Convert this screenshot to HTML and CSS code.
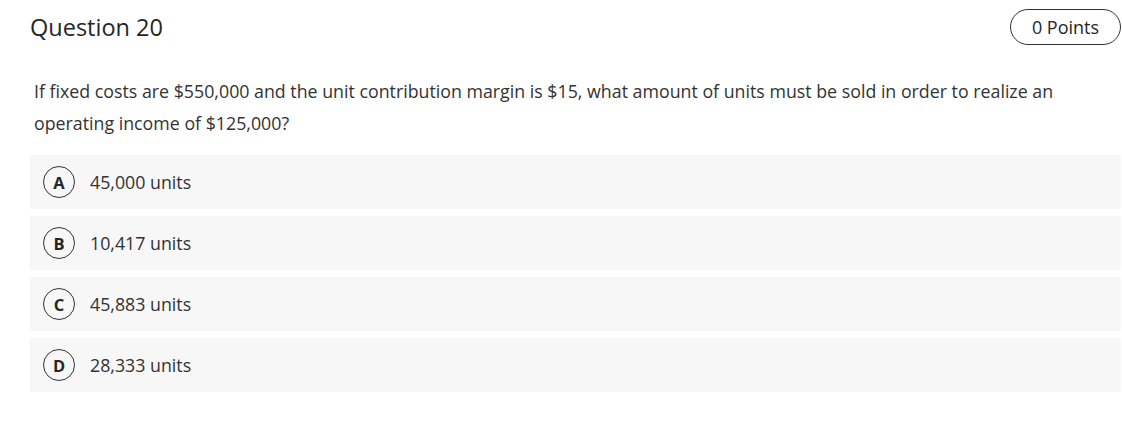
FILE: index.html
```html
<!DOCTYPE html>
<html>
<head>
<meta charset="utf-8">
<link rel="stylesheet" href="styles.css">
</head>
<body>
<div class="page">
  <div class="header">
    <h2 class="title">Question 20</h2>
    <span class="points">0 Points</span>
  </div>
  <p class="question">If fixed costs are $550,000 and the unit contribution margin is $15, what amount of units must be sold in order to realize an operating income of $125,000?</p>
  <div class="options">
    <div class="option"><span class="letter">A</span><span class="label">45,000 units</span></div>
    <div class="option"><span class="letter">B</span><span class="label">10,417 units</span></div>
    <div class="option"><span class="letter">C</span><span class="label">45,883 units</span></div>
    <div class="option"><span class="letter">D</span><span class="label">28,333 units</span></div>
  </div>
</div>
</body>
</html>
```

FILE: styles.css
```css
html, body {
  margin: 0;
  padding: 0;
  background: #ffffff;
}
body {
  font-family: "Open Sans", "Noto Sans", sans-serif;
  color: #262626;
}
.page {
  padding: 9px 1px 0 30px;
}
.header {
  display: flex;
  justify-content: space-between;
  align-items: center;
  height: 36px;
}
.title {
  margin: 0;
  font-size: 23.5px;
  font-weight: 400;
  color: #262626;
  line-height: 32px;
}
.points {
  box-sizing: border-box;
  height: 36px;
  width: 111px;
  border: 1.5px solid #333;
  border-radius: 18px;
  display: flex;
  align-items: center;
  justify-content: center;
  font-size: 18px;
  color: #262626;
}
.question {
  margin: 30px 0 0 4px;
  font-size: 17.8px;
  line-height: 32px;
  color: #333;
  padding-right: 40px;
}
.options {
  margin-top: 16px;
  display: flex;
  flex-direction: column;
  gap: 7px;
}
.option {
  display: flex;
  align-items: center;
  height: 54px;
  background: #f7f7f7;
  border-radius: 2px;
  padding-left: 13px;
}
.letter {
  box-sizing: border-box;
  width: 32px;
  height: 32px;
  border: 1.5px solid #333;
  border-radius: 50%;
  display: flex;
  align-items: center;
  justify-content: center;
  font-size: 16.5px;
  font-weight: 700;
  color: #262626;
}
.label {
  margin-left: 15px;
  font-size: 17.8px;
  color: #333;
}
```
